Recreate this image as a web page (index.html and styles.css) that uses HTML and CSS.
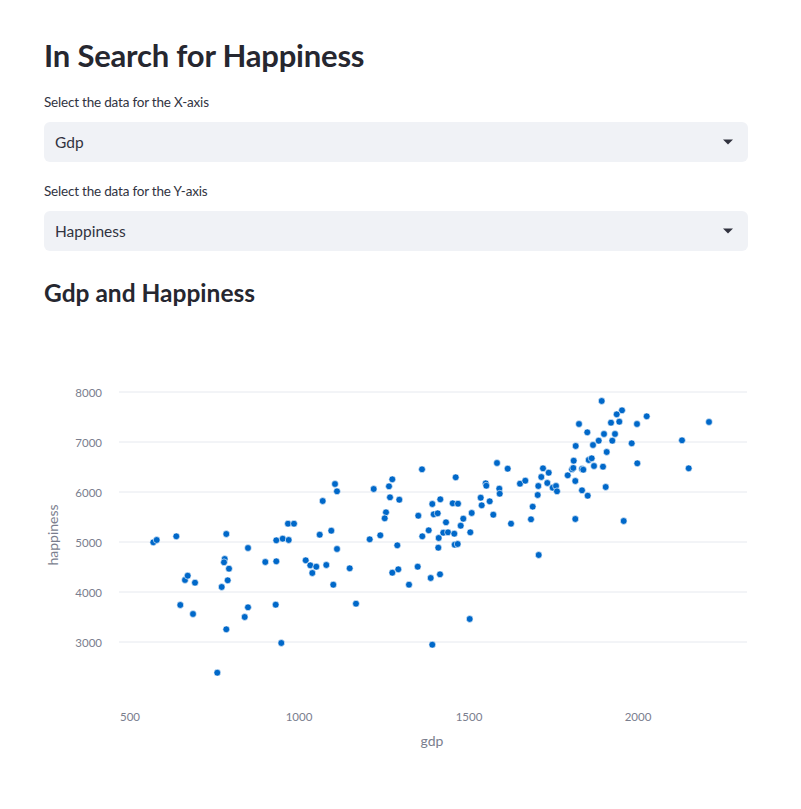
FILE: index.html
```html
<!DOCTYPE html>
<html lang="en">
<head>
<meta charset="utf-8">
<title>In Search for Happiness</title>
<link rel="stylesheet" href="styles.css">
</head>
<body>
<main class="main">
  <h1 class="title">In Search for Happiness</h1>
  <div class="field">
    <label class="field-label">Select the data for the X-axis</label>
    <div class="select">
      <span class="select-value">Gdp</span>
      <svg class="select-arrow" viewBox="0 0 10 6" width="10" height="6"><path d="M0 0.5 H10 L5 5.5 Z"/></svg>
    </div>
  </div>
  <div class="field">
    <label class="field-label">Select the data for the Y-axis</label>
    <div class="select">
      <span class="select-value">Happiness</span>
      <svg class="select-arrow" viewBox="0 0 10 6" width="10" height="6"><path d="M0 0.5 H10 L5 5.5 Z"/></svg>
    </div>
  </div>
  <h2 class="subtitle">Gdp and Happiness</h2>
  <svg class="chart" width="704" height="460" viewBox="44 320 704 460">
    <g class="grid">
      <line x1="119" x2="747" y1="392" y2="392"/>
      <line x1="119" x2="747" y1="442" y2="442"/>
      <line x1="119" x2="747" y1="492" y2="492"/>
      <line x1="119" x2="747" y1="542" y2="542"/>
      <line x1="119" x2="747" y1="592" y2="592"/>
      <line x1="119" x2="747" y1="642" y2="642"/>
    </g>
    <g class="ytick">
      <text x="102" y="396.5">8000</text>
      <text x="102" y="446.5">7000</text>
      <text x="102" y="496.5">6000</text>
      <text x="102" y="546.5">5000</text>
      <text x="102" y="596.5">4000</text>
      <text x="102" y="646.5">3000</text>
    </g>
    <g class="xtick">
      <text x="130" y="721">500</text>
      <text x="299" y="721">1000</text>
      <text x="469" y="721">1500</text>
      <text x="638" y="721">2000</text>
    </g>
    <text class="axis-title" x="432" y="746">gdp</text>
    <text class="axis-title" transform="translate(58 535) rotate(-90)">happiness</text>
    <g class="points">
      <circle cx="153.3" cy="542.3" r="3.4"/><circle cx="156.7" cy="540" r="3.4"/><circle cx="176.3" cy="536.3" r="3.4"/><circle cx="226.3" cy="534" r="3.4"/>
      <circle cx="185" cy="580" r="3.4"/><circle cx="187.7" cy="575.7" r="3.4"/><circle cx="195" cy="582.7" r="3.4"/><circle cx="180.3" cy="605" r="3.4"/>
      <circle cx="193" cy="614" r="3.4"/><circle cx="224.7" cy="559" r="3.4"/><circle cx="224" cy="562.3" r="3.4"/><circle cx="229" cy="568.7" r="3.4"/>
      <circle cx="227.7" cy="580.3" r="3.4"/><circle cx="221.7" cy="587" r="3.4"/><circle cx="226.3" cy="629.3" r="3.4"/><circle cx="217.3" cy="672.7" r="3.4"/>
      <circle cx="248" cy="548" r="3.4"/><circle cx="248" cy="607.3" r="3.4"/><circle cx="244.7" cy="617" r="3.4"/><circle cx="265.3" cy="562" r="3.4"/>
      <circle cx="276.3" cy="561.3" r="3.4"/><circle cx="275.7" cy="604.7" r="3.4"/><circle cx="281.3" cy="643" r="3.4"/><circle cx="276.3" cy="540.3" r="3.4"/>
      <circle cx="282.7" cy="538.7" r="3.4"/><circle cx="288.7" cy="540" r="3.4"/><circle cx="288" cy="523.7" r="3.4"/><circle cx="294" cy="523.7" r="3.4"/>
      <circle cx="305.7" cy="560.3" r="3.4"/><circle cx="310.3" cy="565.3" r="3.4"/><circle cx="316.3" cy="566.7" r="3.4"/><circle cx="312.3" cy="573" r="3.4"/>
      <circle cx="326.3" cy="565" r="3.4"/><circle cx="333.3" cy="584.7" r="3.4"/><circle cx="319.7" cy="534.7" r="3.4"/><circle cx="331.3" cy="530.7" r="3.4"/>
      <circle cx="322.7" cy="501" r="3.4"/><circle cx="335" cy="484" r="3.4"/><circle cx="337" cy="491.3" r="3.4"/><circle cx="337" cy="549" r="3.4"/>
      <circle cx="349.7" cy="568.3" r="3.4"/><circle cx="356" cy="603.7" r="3.4"/><circle cx="369.7" cy="539.3" r="3.4"/><circle cx="373.7" cy="489" r="3.4"/>
      <circle cx="380.3" cy="535.3" r="3.4"/><circle cx="386" cy="512.3" r="3.4"/><circle cx="384.7" cy="518.3" r="3.4"/><circle cx="389" cy="486.3" r="3.4"/>
      <circle cx="392.3" cy="479.3" r="3.4"/><circle cx="390" cy="497.3" r="3.4"/><circle cx="399.3" cy="499.7" r="3.4"/><circle cx="397.3" cy="545.3" r="3.4"/>
      <circle cx="392.3" cy="572.7" r="3.4"/><circle cx="398.3" cy="569.3" r="3.4"/><circle cx="409" cy="584.7" r="3.4"/><circle cx="417.7" cy="566.7" r="3.4"/>
      <circle cx="422" cy="469.3" r="3.4"/><circle cx="418.3" cy="515.7" r="3.4"/><circle cx="422.3" cy="536.3" r="3.4"/><circle cx="428.7" cy="530.3" r="3.4"/>
      <circle cx="432.3" cy="504" r="3.4"/><circle cx="433.7" cy="514.3" r="3.4"/><circle cx="437.7" cy="513.3" r="3.4"/><circle cx="440.3" cy="499.3" r="3.4"/>
      <circle cx="438.7" cy="538" r="3.4"/><circle cx="438.3" cy="547.7" r="3.4"/><circle cx="430.7" cy="578" r="3.4"/><circle cx="440" cy="574.3" r="3.4"/>
      <circle cx="446" cy="522.3" r="3.4"/><circle cx="443.3" cy="532.7" r="3.4"/><circle cx="448" cy="532.3" r="3.4"/><circle cx="452.7" cy="503.3" r="3.4"/>
      <circle cx="458" cy="503.7" r="3.4"/><circle cx="455.7" cy="477.3" r="3.4"/><circle cx="454.3" cy="533.7" r="3.4"/><circle cx="454.7" cy="544.7" r="3.4"/>
      <circle cx="457.7" cy="544" r="3.4"/><circle cx="460.7" cy="525.7" r="3.4"/><circle cx="463.3" cy="518.7" r="3.4"/><circle cx="471.7" cy="513" r="3.4"/>
      <circle cx="470.3" cy="532.3" r="3.4"/><circle cx="469.7" cy="619" r="3.4"/><circle cx="432.3" cy="644.7" r="3.4"/><circle cx="480.7" cy="497.7" r="3.4"/>
      <circle cx="481.7" cy="505.3" r="3.4"/><circle cx="485.7" cy="483.3" r="3.4"/><circle cx="486.3" cy="485.7" r="3.4"/><circle cx="489.7" cy="501.3" r="3.4"/>
      <circle cx="493.3" cy="514.7" r="3.4"/><circle cx="497" cy="463" r="3.4"/><circle cx="499.3" cy="488.7" r="3.4"/><circle cx="499.7" cy="493.7" r="3.4"/>
      <circle cx="507.7" cy="468.7" r="3.4"/><circle cx="511" cy="523.7" r="3.4"/><circle cx="520" cy="483.7" r="3.4"/><circle cx="525.3" cy="480.7" r="3.4"/>
      <circle cx="531" cy="519.3" r="3.4"/><circle cx="532.7" cy="506.7" r="3.4"/><circle cx="537.7" cy="495" r="3.4"/><circle cx="538.3" cy="486" r="3.4"/>
      <circle cx="541.3" cy="477" r="3.4"/><circle cx="543" cy="468.3" r="3.4"/><circle cx="548.7" cy="472.7" r="3.4"/><circle cx="547.3" cy="483" r="3.4"/>
      <circle cx="552.7" cy="487.7" r="3.4"/><circle cx="556" cy="486" r="3.4"/><circle cx="557" cy="491.3" r="3.4"/><circle cx="538.7" cy="555" r="3.4"/>
      <circle cx="567.7" cy="475.3" r="3.4"/><circle cx="572" cy="469.3" r="3.4"/><circle cx="573.3" cy="468" r="3.4"/><circle cx="573.7" cy="460.7" r="3.4"/>
      <circle cx="575.3" cy="481" r="3.4"/><circle cx="575.3" cy="519" r="3.4"/><circle cx="575.7" cy="446" r="3.4"/><circle cx="579" cy="424" r="3.4"/>
      <circle cx="582" cy="469" r="3.4"/><circle cx="583.3" cy="469.7" r="3.4"/><circle cx="582" cy="490.3" r="3.4"/><circle cx="587.3" cy="432.3" r="3.4"/>
      <circle cx="588.7" cy="460" r="3.4"/><circle cx="591.7" cy="458.3" r="3.4"/><circle cx="587.7" cy="495.7" r="3.4"/><circle cx="593" cy="445" r="3.4"/>
      <circle cx="594" cy="466" r="3.4"/><circle cx="598.7" cy="440.7" r="3.4"/><circle cx="601.7" cy="401" r="3.4"/><circle cx="622" cy="410.3" r="3.4"/>
      <circle cx="616.7" cy="414.3" r="3.4"/><circle cx="611" cy="422.7" r="3.4"/><circle cx="619.3" cy="421.7" r="3.4"/><circle cx="637" cy="424" r="3.4"/>
      <circle cx="646.7" cy="416.3" r="3.4"/><circle cx="709" cy="422" r="3.4"/><circle cx="604" cy="434" r="3.4"/><circle cx="615" cy="434" r="3.4"/>
      <circle cx="612.3" cy="440.7" r="3.4"/><circle cx="631.7" cy="443.3" r="3.4"/><circle cx="682" cy="440.3" r="3.4"/><circle cx="606.7" cy="452" r="3.4"/>
      <circle cx="603" cy="466.7" r="3.4"/><circle cx="637.3" cy="463.3" r="3.4"/><circle cx="688.7" cy="468.3" r="3.4"/><circle cx="605.7" cy="487" r="3.4"/>
      <circle cx="623.7" cy="521" r="3.4"/>
    </g>
  </svg>
</main>
</body>
</html>
```

FILE: styles.css
```css
* { box-sizing: border-box; }

body {
  margin: 0;
  background: #ffffff;
  color: #31333f;
  font-family: Lato, "Noto Sans", sans-serif;
}

.main {
  width: 704px;
  margin-left: 44px;
  display: flex;
  flex-direction: column;
}

.title {
  margin: 0;
  padding-top: 35px;
  font-size: 31px;
  line-height: 40px;
  font-weight: 700;
  letter-spacing: -0.2px;
  color: #262730;
}

.field {
  display: flex;
  flex-direction: column;
  gap: 10px;
  margin-top: 17px;
}

.field + .field {
  margin-top: 19px;
}

.field-label {
  font-size: 13.5px;
  line-height: 20px;
  letter-spacing: -0.2px;
  color: #31333f;
}

.select {
  height: 40px;
  background: #f0f2f6;
  border-radius: 6px;
  display: flex;
  align-items: center;
  justify-content: space-between;
  padding: 0 15px 0 11px;
}

.select-value {
  font-size: 15.5px;
  color: #31333f;
}

.select-arrow {
  fill: #31333f;
}

.subtitle {
  margin: 26px 0 0;
  font-size: 24.5px;
  line-height: 32px;
  font-weight: 700;
  color: #262730;
}

.chart {
  display: block;
  margin-top: 11px;
}

.grid line {
  stroke: #e6e9ef;
  stroke-width: 1;
}

.ytick text {
  text-anchor: end;
  font-size: 11.5px;
  fill: #7a7e8e;
}

.xtick text {
  text-anchor: middle;
  font-size: 11.5px;
  fill: #7a7e8e;
}

.axis-title {
  text-anchor: middle;
  font-size: 14px;
  fill: #7a7e8e;
}

.points circle {
  fill: #0068c9;
  stroke: #ffffff;
  stroke-width: 0.6;
}
```
